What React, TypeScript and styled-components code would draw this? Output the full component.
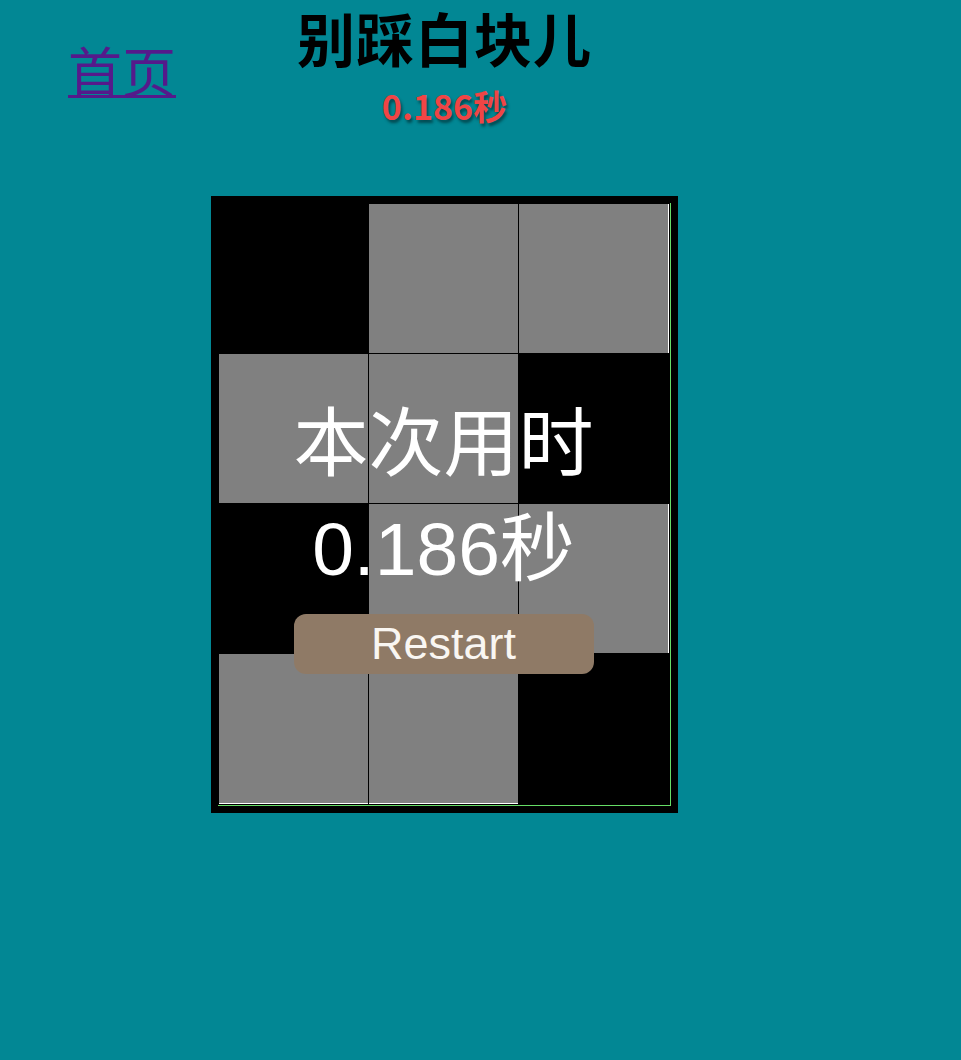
import React from "react";
import styled, { createGlobalStyle } from "styled-components";

const GlobalStyle = createGlobalStyle`
  html, body {
    margin: 0;
    padding: 0;
    background: #028794;
  }
  body {
    min-height: 1060px;
    font-family: "Noto Sans CJK SC", "Liberation Sans", sans-serif;
  }
`;

const Page = styled.div`
  display: grid;
  grid-template-columns: 211px 467px;
  grid-template-rows: 196px auto;
  min-height: 1060px;
  background: #028794;
`;

const HomeCell = styled.div`
  padding: 38px 0 0 68px;
`;

const HomeLink = styled.a`
  font-family: "Noto Sans CJK SC", sans-serif;
  font-size: 54px;
  line-height: 1.2;
  color: #551a8b;
  text-decoration: underline;
  text-decoration-thickness: 3px;
  text-underline-offset: 2px;
`;

const TitleBlock = styled.div`
  display: flex;
  flex-direction: column;
  align-items: center;
  padding-top: 3px;
`;

const Title = styled.h1`
  margin: 0;
  font-family: "Noto Sans CJK SC", sans-serif;
  font-weight: 700;
  font-size: 58px;
  line-height: 1.2;
  letter-spacing: 1px;
  color: #000;
`;

const Timer = styled.div`
  margin-top: 13px;
  font-family: "Noto Sans CJK SC", sans-serif;
  font-weight: 700;
  font-size: 34px;
  line-height: 1.2;
  color: #f04545;
  text-shadow: 2px 3px 3px rgba(0, 0, 0, 0.45);
`;

const Board = styled.div`
  grid-column: 2;
  align-self: start;
  width: 467px;
  box-sizing: border-box;
  padding: 7px;
  background: #000;
`;

const Frame = styled.div`
  box-sizing: border-box;
  width: 453px;
  padding: 1px 2px 2px 1px;
  border-right: 1px solid #66dd66;
  border-bottom: 1px solid #66dd66;
`;

const Grid = styled.div`
  position: relative;
  display: grid;
  grid-template-columns: repeat(3, 149px);
  grid-auto-rows: 149px;
  gap: 1px;
  width: 449px;
`;

const Cell = styled.div<{ $gray: boolean; $lastCol: boolean; $lastRow: boolean }>`
  background: ${(p) => (p.$gray ? "#808080" : "#000")};
  box-shadow: ${(p) => {
    const s: string[] = [];
    if (p.$gray && p.$lastCol) s.push("1px 0 0 #fff");
    if (p.$gray && p.$lastRow) s.push("0 1px 0 #fff");
    if (p.$gray && p.$lastRow && p.$lastCol) s.push("1px 1px 0 #fff");
    return s.length ? s.join(", ") : "none";
  }};
`;

const Overlay = styled.div`
  position: absolute;
  inset: 0;
  display: flex;
  flex-direction: column;
  align-items: center;
  padding-top: 203px;
  color: #fff;
  font-family: "Liberation Sans", "Noto Sans CJK SC", sans-serif;
`;

const BigLine = styled.div<{ $gap: number }>`
  margin-top: ${(p) => p.$gap}px;
  font-size: 75px;
  line-height: 75px;
  white-space: nowrap;
`;

const RestartButton = styled.button`
  margin-top: 27px;
  width: 300px;
  height: 60px;
  border: none;
  border-radius: 12px;
  background: #8f7a66;
  color: #f9f6f2;
  font-family: "Liberation Sans", sans-serif;
  font-size: 45px;
  line-height: 60px;
  padding: 0;
  cursor: pointer;
`;

const layout = [
  [false, true, true],
  [true, true, false],
  [false, true, true],
  [true, true, false],
];

export default function App() {
  return (
    <>
      <GlobalStyle />
      <Page>
        <HomeCell>
          <HomeLink href="#">首页</HomeLink>
        </HomeCell>
        <TitleBlock>
          <Title>别踩白块儿</Title>
          <Timer>0.186秒</Timer>
        </TitleBlock>
        <Board>
          <Frame>
            <Grid>
              {layout.map((row, r) =>
                row.map((gray, c) => (
                  <Cell
                    key={`${r}-${c}`}
                    $gray={gray}
                    $lastCol={c === 2}
                    $lastRow={r === 3}
                  />
                ))
              )}
              <Overlay>
                <BigLine $gap={0}>本次用时</BigLine>
                <BigLine $gap={30}>0.186秒</BigLine>
                <RestartButton>Restart</RestartButton>
              </Overlay>
            </Grid>
          </Frame>
        </Board>
      </Page>
    </>
  );
}
